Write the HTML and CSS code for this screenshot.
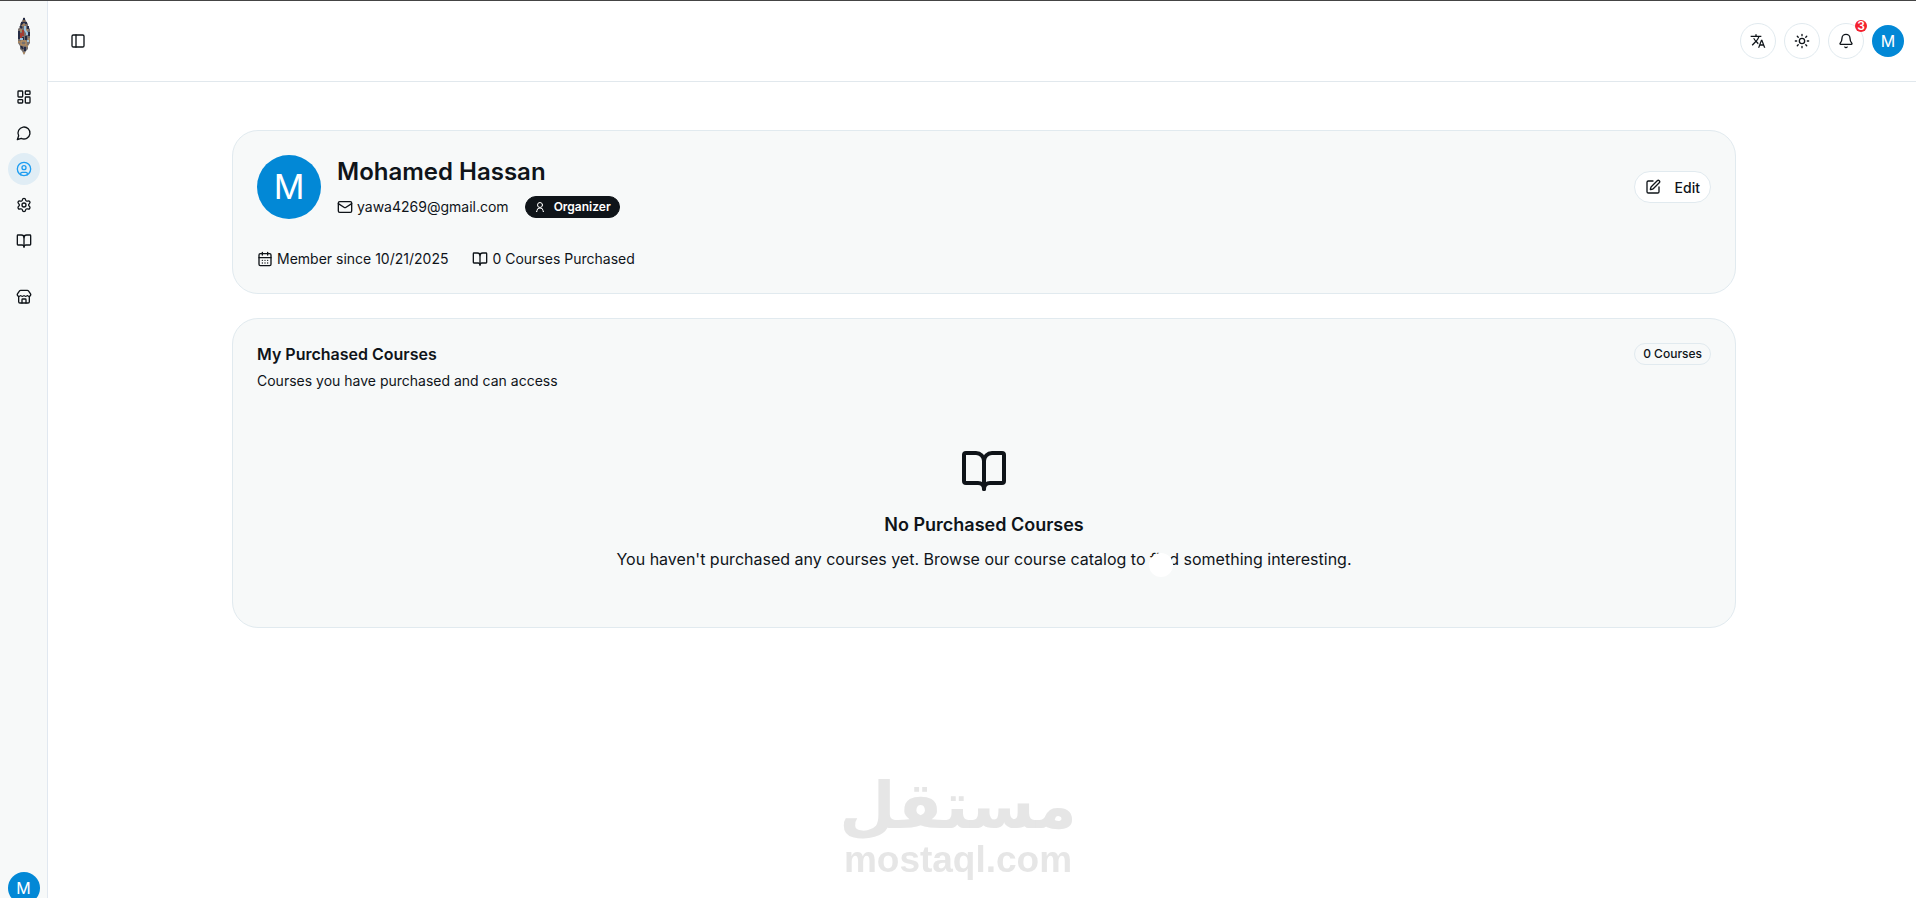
FILE: index.html
```html
<!DOCTYPE html>
<html lang="en">
<head>
    <meta charset="UTF-8">
    <meta name="viewport" content="width=device-width, initial-scale=1.0">
    <title>Profile</title>
    <link rel="stylesheet" href="styles.css">
</head>
<body>
    <!-- Shared icons -->
    <svg class="sprite" aria-hidden="true">
        <symbol id="book" viewBox="0 0 24 24">
            <path d="M12 7v14"/>
            <path d="M3 18a1 1 0 0 1-1-1V4a1 1 0 0 1 1-1h5a4 4 0 0 1 4 4 4 4 0 0 1 4-4h5a1 1 0 0 1 1 1v13a1 1 0 0 1-1 1h-6a3 3 0 0 0-3 3 3 3 0 0 0-3-3z"/>
        </symbol>
    </svg>

    <div class="layout">
        <aside class="sidebar">
            <a class="logo" href="#" aria-label="Home">
                <svg width="14" height="38" viewBox="0 0 14 38">
                    <path d="M7 0l1 2 1 2 2 3v3l2 2v14l-2 3v3l-2 2-1 2-1 2-1-2-1-2-2-2v-3l-2-3V12l2-2V7l2-3 1-2z" fill="#77706e"/>
                    <path d="M7 1v5M5 5v3M9 5v2M3 9l2 2M11 9v3M2 14v8M12 15v4M9 19v4M4 29l2 3M8 30v4M6 20v3" stroke="#252c45" stroke-width="2"/>
                    <path d="M5 8h3M4 12v3M10 12v2M12 21v4M2 24v2M4 24h5v4H4zM10 28v2M7 35v2M6 4h2" stroke="#d09a58" fill="none"/>
                    <path d="M6 13v6M4 16v5" stroke="#a33b32" stroke-width="2" fill="none"/>
                    <path d="M8 9v4l2 3v2M3 22h3M11 23v2" stroke="#9cc3df" stroke-width="2" fill="none"/>
                </svg>
            </a>
            <nav class="nav">
                <a class="nav-item" href="#" aria-label="Dashboard">
                    <svg class="icon" viewBox="0 0 24 24"><rect width="7" height="9" x="3" y="3" rx="1"/><rect width="7" height="5" x="14" y="3" rx="1"/><rect width="7" height="9" x="14" y="12" rx="1"/><rect width="7" height="5" x="3" y="16" rx="1"/></svg>
                </a>
                <a class="nav-item" href="#" aria-label="Messages">
                    <svg class="icon" viewBox="0 0 24 24"><path d="M7.9 20A9 9 0 1 0 4 16.1L2 22Z"/></svg>
                </a>
                <a class="nav-item active" href="#" aria-label="Profile">
                    <svg class="icon" viewBox="0 0 24 24"><circle cx="12" cy="12" r="10"/><circle cx="12" cy="10" r="3"/><path d="M7 20.662V19a2 2 0 0 1 2-2h6a2 2 0 0 1 2 2v1.662"/></svg>
                </a>
                <a class="nav-item" href="#" aria-label="Settings">
                    <svg class="icon" viewBox="0 0 24 24"><path d="M9.671 4.136a2.34 2.34 0 0 1 4.659 0 2.34 2.34 0 0 0 3.319 1.915 2.34 2.34 0 0 1 2.33 4.033 2.34 2.34 0 0 0 0 3.831 2.34 2.34 0 0 1-2.33 4.033 2.34 2.34 0 0 0-3.319 1.915 2.34 2.34 0 0 1-4.659 0 2.34 2.34 0 0 0-3.32-1.915 2.34 2.34 0 0 1-2.33-4.033 2.34 2.34 0 0 0 0-3.831A2.34 2.34 0 0 1 6.35 6.051a2.34 2.34 0 0 0 3.319-1.915"/><circle cx="12" cy="12" r="3"/></svg>
                </a>
                <a class="nav-item" href="#" aria-label="My courses">
                    <svg class="icon"><use href="#book"/></svg>
                </a>
            </nav>
            <nav class="nav">
                <a class="nav-item" href="#" aria-label="Store">
                    <svg class="icon" viewBox="0 0 24 24"><path d="M15 21v-5a1 1 0 0 0-1-1h-4a1 1 0 0 0-1 1v5"/><path d="M17.774 10.31a1.12 1.12 0 0 0-1.549 0 2.5 2.5 0 0 1-3.451 0 1.12 1.12 0 0 0-1.548 0 2.5 2.5 0 0 1-3.452 0 1.12 1.12 0 0 0-1.549 0 2.5 2.5 0 0 1-3.77-3.248l2.889-4.184A2 2 0 0 1 7 2h10a2 2 0 0 1 1.653.873l2.895 4.192a2.5 2.5 0 0 1-3.774 3.244"/><path d="M4 10.95V19a2 2 0 0 0 2 2h12a2 2 0 0 0 2-2v-8.05"/></svg>
                </a>
            </nav>
            <button class="avatar sidebar-user" type="button">M</button>
        </aside>

        <div class="page">
            <header class="topbar">
                <button class="toggle" type="button" aria-label="Toggle sidebar">
                    <svg class="icon" viewBox="0 0 24 24"><rect width="18" height="18" x="3" y="3" rx="2"/><path d="M9 3v18"/></svg>
                </button>
                <div class="actions">
                    <button class="round-btn" type="button" aria-label="Language">
                        <svg class="icon solid" viewBox="0 0 24 24"><path d="M12.87 15.07l-2.54-2.51.03-.03A17.52 17.52 0 0 0 14.07 6H17V4h-7V2H8v2H1v2h11.17C11.5 7.92 10.44 9.75 9 11.35 8.07 10.32 7.3 9.19 6.69 8h-2c.73 1.63 1.73 3.17 2.98 4.56l-5.09 5.02L4 19l5-5 3.11 3.11.76-2.04zM18.5 10h-2L12 22h2l1.12-3h4.75L21 22h2l-4.5-12zm-2.62 7l1.62-4.33L19.12 17h-3.24z"/></svg>
                    </button>
                    <button class="round-btn" type="button" aria-label="Theme">
                        <svg class="icon" viewBox="0 0 24 24"><circle cx="12" cy="12" r="4"/><path d="M12 2v2M12 20v2M4.93 4.93l1.41 1.41M17.66 17.66l1.41 1.41M2 12h2M20 12h2M6.34 17.66l-1.41 1.41M19.07 4.93l-1.41 1.41"/></svg>
                    </button>
                    <button class="round-btn" type="button" aria-label="Notifications">
                        <svg class="icon" viewBox="0 0 24 24"><path d="M10.268 21a2 2 0 0 0 3.464 0"/><path d="M3.262 15.326A1 1 0 0 0 4 17h16a1 1 0 0 0 .74-1.673C19.41 13.956 18 12.499 18 8A6 6 0 0 0 6 8c0 4.499-1.411 5.956-2.738 7.326"/></svg>
                        <span class="count">3</span>
                    </button>
                    <button class="avatar" type="button">M</button>
                </div>
            </header>

            <main class="content">
                <section class="card">
                    <div class="profile">
                        <div class="avatar avatar-lg">M</div>
                        <div class="profile-info">
                            <h1>Mohamed Hassan</h1>
                            <div class="profile-row">
                                <span class="meta">
                                    <svg class="icon" viewBox="0 0 24 24"><rect width="20" height="16" x="2" y="4" rx="2"/><path d="m22 7-8.97 5.7a1.94 1.94 0 0 1-2.06 0L2 7"/></svg>
                                    yawa4269@gmail.com
                                </span>
                                <span class="badge badge-dark">
                                    <svg class="icon icon-sm" viewBox="0 0 24 24"><circle cx="12" cy="8" r="5"/><path d="M5 21h1v-2a6 5 0 0 1 12 0v2h1"/></svg>
                                    Organizer
                                </span>
                            </div>
                        </div>
                        <button class="edit-btn" type="button">
                            <svg class="icon" viewBox="0 0 24 24"><path d="M12 3H5a2 2 0 0 0-2 2v14a2 2 0 0 0 2 2h14a2 2 0 0 0 2-2v-7"/><path d="M18.375 2.625a1 1 0 0 1 3 3l-9.013 9.014a2 2 0 0 1-.853.505l-2.873.84a.5.5 0 0 1-.62-.62l.84-2.873a2 2 0 0 1 .506-.852z"/></svg>
                            Edit
                        </button>
                    </div>
                    <div class="stats">
                        <span class="meta">
                            <svg class="icon" viewBox="0 0 24 24"><path d="M8 2v4M16 2v4"/><rect width="18" height="18" x="3" y="4" rx="2"/><path d="M3 10h18M8 14h.01M12 14h.01M16 14h.01M8 18h.01M12 18h.01M16 18h.01"/></svg>
                            Member since 10/21/2025
                        </span>
                        <span class="meta">
                            <svg class="icon"><use href="#book"/></svg>
                            0 Courses Purchased
                        </span>
                    </div>
                </section>

                <section class="card">
                    <div class="card-head">
                        <div>
                            <h2>My Purchased Courses</h2>
                            <p>Courses you have purchased and can access</p>
                        </div>
                        <span class="badge">0 Courses</span>
                    </div>
                    <div class="empty">
                        <svg class="icon icon-lg"><use href="#book"/></svg>
                        <h3>No Purchased Courses</h3>
                        <p>You haven't purchased any courses yet. Browse our course catalog to <span class="pointed">find<i class="pointer"></i></span> something interesting.</p>
                    </div>
                </section>
            </main>
        </div>
    </div>

    <div class="watermark">
        <span class="watermark-ar" lang="ar" dir="rtl">مستقل</span>
        <span class="watermark-en">mostaql.com</span>
    </div>
</body>
</html>
```
FILE: styles.css
```css
* {
    box-sizing: border-box;
}
body {
    margin: 0;
    height: 100vh;
    overflow: hidden;
    border-top: 1px solid #444;
    background-color: #fff;
    color: #0f1419;
    font-family: Inter, sans-serif;
    font-size: 14px;
    line-height: 20px;
}
h1, h2, h3, p {
    margin: 0;
}
a {
    color: inherit;
}
button {
    font-family: inherit;
    color: inherit;
    padding: 0;
    cursor: pointer;
}
.sprite {
    display: none;
}
.icon {
    width: 16px;
    height: 16px;
    flex-shrink: 0;
    fill: none;
    stroke: currentColor;
    stroke-width: 2;
    stroke-linecap: round;
    stroke-linejoin: round;
}
.icon.solid {
    fill: currentColor;
    stroke: none;
}
.icon-sm {
    width: 12px;
    height: 12px;
}
.icon-lg {
    width: 48px;
    height: 48px;
}
.layout {
    display: flex;
}

/* Sidebar */
.sidebar {
    display: flex;
    flex-direction: column;
    align-items: center;
    gap: 24px;
    width: 48px;
    height: calc(100vh + 13px);
    padding: 16px 0 8px;
    background-color: #f7f9f9;
    border-right: 1px solid #e1e8f0;
}
.logo {
    display: flex;
    height: 40px;
}
.nav {
    display: flex;
    flex-direction: column;
    gap: 4px;
}
.nav-item {
    display: flex;
    align-items: center;
    justify-content: center;
    width: 32px;
    height: 32px;
    border-radius: 50%;
}
.nav-item.active {
    background-color: #e0edf5;
    color: #1e9df1;
}
.avatar {
    display: flex;
    align-items: center;
    justify-content: center;
    flex-shrink: 0;
    width: 32px;
    height: 32px;
    border: none;
    border-radius: 50%;
    background-color: #0288d6;
    color: #fff;
    font-size: 16px;
}
.avatar-lg {
    width: 64px;
    height: 64px;
    font-size: 34px;
}
.sidebar-user {
    margin-top: auto;
}

/* Top bar */
.page {
    flex: 1;
    min-width: 0;
}
.topbar {
    display: flex;
    align-items: center;
    justify-content: space-between;
    height: 81px;
    padding: 0 12px 0 16px;
    border-bottom: 1px solid #e1e8ed;
}
.toggle {
    display: flex;
    align-items: center;
    justify-content: center;
    width: 28px;
    height: 28px;
    border: none;
    background: none;
}
.actions {
    display: flex;
    align-items: center;
    gap: 8px;
}
.round-btn {
    position: relative;
    display: flex;
    align-items: center;
    justify-content: center;
    width: 36px;
    height: 36px;
    border: 1px solid #e1eaef;
    border-radius: 50%;
    background-color: #fff;
}
.count {
    position: absolute;
    top: -4px;
    right: -4px;
    width: 12px;
    height: 12px;
    border-radius: 50%;
    background-color: #f4212e;
    color: #fff;
    font-size: 12px;
    font-weight: 600;
    line-height: 12px;
    text-align: center;
}

/* Content */
.content {
    display: flex;
    flex-direction: column;
    gap: 24px;
    max-width: 1536px;
    margin: 0 auto;
    padding: 48px 14px 48px 18px;
}
.card {
    padding: 24px;
    border: 1px solid #e1eaef;
    border-radius: 26px;
    background-color: #f7f9f9;
}
.profile {
    display: flex;
    align-items: center;
    gap: 16px;
}
.profile-info {
    display: flex;
    flex-direction: column;
    gap: 8px;
    flex: 1;
}
.profile-info h1 {
    font-size: 24px;
    font-weight: 600;
    line-height: 32px;
}
.profile-row {
    display: flex;
    align-items: center;
    gap: 16px;
}
.meta {
    display: flex;
    align-items: center;
    gap: 4px;
}
.badge {
    display: flex;
    align-items: center;
    gap: 8px;
    height: 22px;
    padding: 0 8px;
    border: 1px solid #e1eaef;
    border-radius: 11px;
    font-size: 12px;
    font-weight: 500;
}
.badge-dark {
    background-color: #0f1419;
    border-color: #0f1419;
    color: #fff;
    font-weight: 600;
}
.edit-btn {
    display: flex;
    align-items: center;
    gap: 14px;
    height: 32px;
    padding: 0 10px;
    border: 1px solid #e1eaef;
    border-radius: 16px;
    background-color: #fff;
    font-size: 14px;
    font-weight: 500;
}
.stats {
    display: flex;
    gap: 24px;
    margin-top: 30px;
}
.card-head {
    display: flex;
    align-items: flex-start;
    justify-content: space-between;
}
.card-head h2 {
    margin-bottom: 6px;
    font-size: 16px;
    font-weight: 600;
    line-height: 22px;
}
.empty {
    display: flex;
    flex-direction: column;
    align-items: center;
    padding: 56px 0 32px;
    text-align: center;
}
.empty h3 {
    margin: 16px 0 8px;
    font-size: 18px;
    font-weight: 600;
    line-height: 28px;
}
.empty p {
    font-size: 16px;
    line-height: 24px;
}
.pointed {
    position: relative;
}
.pointer {
    position: absolute;
    top: 4px;
    left: -1px;
    width: 24px;
    height: 24px;
    border-radius: 50%;
    background-color: #fff;
}

/* Watermark */
.watermark {
    position: fixed;
    left: 0;
    right: 0;
    bottom: 18px;
    display: flex;
    flex-direction: column;
    align-items: center;
    color: #e6e6e6;
    font-weight: bold;
    pointer-events: none;
}
.watermark-ar {
    font-family: "DejaVu Sans", sans-serif;
    font-size: 65px;
    line-height: 68px;
}
.watermark-en {
    font-family: "Liberation Sans", Arial, sans-serif;
    font-size: 37px;
    line-height: 40px;
}
```
